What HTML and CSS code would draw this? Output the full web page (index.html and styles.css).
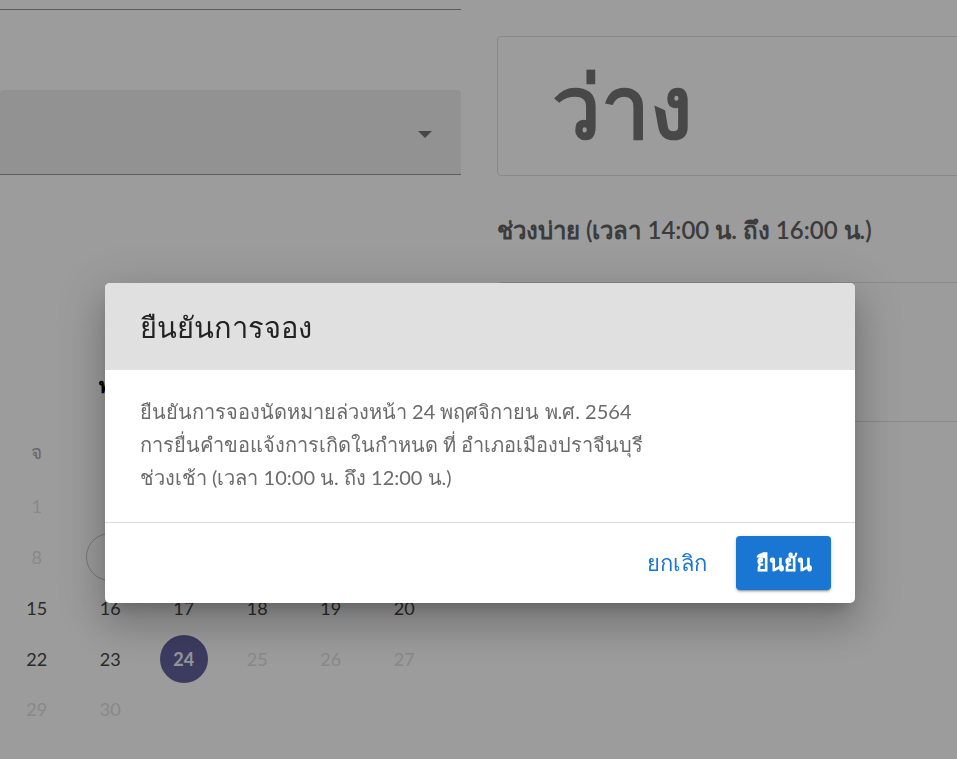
FILE: index.html
```html
<!DOCTYPE html>
<html lang="th">
<head>
<meta charset="utf-8">
<title>ยืนยันการจอง</title>
<link rel="stylesheet" href="styles.css">
</head>
<body>
<div class="page">
  <div class="left">
    <div class="field-top"></div>
    <div class="select"><span class="arrow"></span></div>
    <div class="month">พฤศจิกายน 2564</div>
    <div class="grid">
      <div class="wd">จ</div><div class="wd">อ</div><div class="wd">พ</div><div class="wd">พฤ</div><div class="wd">ศ</div><div class="wd">ส</div>
      <div class="day off">1</div><div class="day off">2</div><div class="day off">3</div><div class="day off">4</div><div class="day off">5</div><div class="day off">6</div>
      <div class="day off">8</div><div class="day off"><span class="today">9</span></div><div class="day off">10</div><div class="day off">11</div><div class="day off">12</div><div class="day off">13</div>
      <div class="day">15</div><div class="day">16</div><div class="day">17</div><div class="day">18</div><div class="day">19</div><div class="day">20</div>
      <div class="day">22</div><div class="day">23</div><div class="day"><span class="selected">24</span></div><div class="day off">25</div><div class="day off">26</div><div class="day off">27</div>
      <div class="day off">29</div><div class="day off">30</div>
    </div>
  </div>
  <div class="right">
    <div class="status-box"><span class="status">ว่าง</span></div>
    <div class="slot-label">ช่วงบ่าย (เวลา 14:00 น. ถึง 16:00 น.)</div>
    <div class="slot-card"></div>
  </div>
</div>
<div class="backdrop"></div>
<div class="dialog" role="dialog">
  <div class="dialog-title">ยืนยันการจอง</div>
  <div class="dialog-body">
    <p>ยืนยันการจองนัดหมายล่วงหน้า 24 พฤศจิกายน พ.ศ. 2564</p>
    <p>การยื่นคำขอแจ้งการเกิดในกำหนด ที่ อำเภอเมืองปราจีนบุรี</p>
    <p>ช่วงเช้า (เวลา 10:00 น. ถึง 12:00 น.)</p>
  </div>
  <div class="dialog-actions">
    <button class="btn-text">ยกเลิก</button>
    <button class="btn-primary">ยืนยัน</button>
  </div>
</div>
</body>
</html>
```

FILE: styles.css
```css
html, body {
  margin: 0;
  padding: 0;
  background: #ffffff;
  overflow: hidden;
  font-family: "Lato", "Noto Sans", sans-serif;
}

.page {
  display: flex;
  gap: 36px;
  width: 1100px;
}

.left {
  width: 461px;
  flex: none;
  display: flex;
  flex-direction: column;
}

.field-top {
  height: 9px;
  border-bottom: 1px solid #959595;
}

.select {
  margin-top: 80px;
  height: 84px;
  background: #efefef;
  border-bottom: 1px solid #979797;
  border-radius: 4px 4px 0 0;
  display: flex;
  align-items: center;
  justify-content: flex-end;
  padding-right: 29px;
}

.arrow {
  width: 0;
  height: 0;
  border-left: 7px solid transparent;
  border-right: 7px solid transparent;
  border-top: 7px solid #757575;
  margin-top: 4px;
}

.month {
  margin-top: 195px;
  height: 30px;
  line-height: 30px;
  padding-left: 99px;
  font-size: 20px;
  font-weight: 700;
  color: #000;
}

.grid {
  margin-top: 25px;
  display: grid;
  grid-template-columns: repeat(6, 73.5px);
  grid-template-rows: 56px;
  grid-auto-rows: 50.75px;
}

.wd {
  display: flex;
  align-items: flex-start;
  justify-content: center;
  padding-top: 12px;
  font-size: 19px;
  color: #a8a8a8;
}

.day {
  display: flex;
  align-items: center;
  justify-content: center;
  font-size: 18px;
  color: #474747;
}

.day.off {
  color: #e0e0e0;
}

.today,
.selected {
  width: 46px;
  height: 46px;
  border-radius: 50%;
  display: flex;
  align-items: center;
  justify-content: center;
}

.today {
  border: 1px solid #c4c4c4;
}

.selected {
  width: 48px;
  height: 48px;
  background: #62629f;
  color: #f4f4fa;
  font-weight: 700;
}

.right {
  flex: none;
  width: 520px;
  display: flex;
  flex-direction: column;
}

.status-box {
  margin-top: 36px;
  height: 138px;
  border: 1px solid #e0e0e0;
  border-radius: 4px;
  padding-left: 54px;
  display: flex;
  align-items: center;
}

.status {
  font-size: 87px;
  font-weight: 700;
  color: #767676;
  line-height: 1;
  margin-top: -4px;
}

.slot-label {
  margin-top: 38px;
  height: 32px;
  line-height: 32px;
  font-size: 24px;
  font-weight: 600;
  color: #626262;
}

.slot-card {
  margin-top: 36px;
  height: 138px;
  border: 1px solid #e0e0e0;
  border-radius: 4px;
}

.backdrop {
  position: fixed;
  inset: 0;
  background: rgba(0, 0, 0, 0.39);
}

.dialog {
  position: absolute;
  left: 105px;
  top: 283px;
  width: 750px;
  height: 320px;
  background: #ffffff;
  border-radius: 5px;
  overflow: hidden;
  display: flex;
  flex-direction: column;
  box-shadow: 0 11px 15px -7px rgba(0,0,0,0.2), 0 24px 38px 3px rgba(0,0,0,0.14), 0 9px 46px 8px rgba(0,0,0,0.12);
}

.dialog-title {
  height: 87px;
  flex: none;
  background: #e0e0e0;
  padding-left: 35px;
  display: flex;
  align-items: center;
  font-size: 29px;
  color: #222222;
  padding-top: 2px;
  box-sizing: border-box;
}

.dialog-body {
  flex: none;
  height: 153px;
  box-sizing: border-box;
  padding: 25px 35px 0;
  border-bottom: 1px solid #dedede;
}

.dialog-body p {
  margin: 0;
  height: 33px;
  line-height: 33px;
  font-size: 20px;
  color: #6b6b6b;
}

.dialog-actions {
  flex: 1;
  display: flex;
  justify-content: flex-end;
  align-items: flex-start;
  gap: 14px;
  padding: 13px 24px 0;
}

.btn-text,
.btn-primary {
  font-family: inherit;
  font-size: 22px;
  height: 54px;
  border: none;
  border-radius: 4px;
  cursor: pointer;
}

.btn-text {
  background: transparent;
  color: #1976d2;
  padding: 0 15px;
}

.btn-primary {
  width: 95px;
  background: #1976d2;
  color: #ffffff;
  font-weight: 700;
  box-shadow: 0 3px 1px -2px rgba(0,0,0,0.2), 0 2px 2px 0 rgba(0,0,0,0.14), 0 1px 5px 0 rgba(0,0,0,0.12);
}
```
